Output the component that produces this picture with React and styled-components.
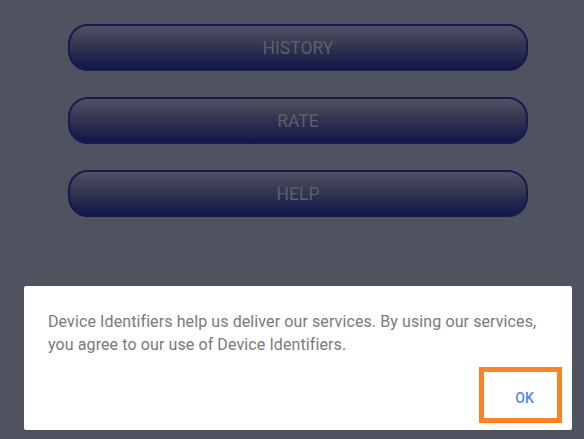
import React from "react";
import styled, { createGlobalStyle } from "styled-components";

const Global = createGlobalStyle`
  html, body {
    margin: 0;
    padding: 0;
    background: #4f525f;
    font-family: Roboto, "Liberation Sans", sans-serif;
  }
`

const Page = styled.div`
  height: 439px;
  display: flex;
  flex-direction: column;
  gap: 26px;
  padding: 24px 0 0 68px;
  box-sizing: border-box;
`

const MenuButton = styled.button`
  width: 460px;
  height: 47px;
  box-sizing: border-box;
  border: 2px solid #161a4c;
  border-radius: 20px;
  background: linear-gradient(to bottom, #4f5262 0%, #343650 45%, #12164a 100%);
  color: #5d5f6b;
  font-family: Roboto, "Liberation Sans", sans-serif;
  font-size: 17.5px;
  padding: 0;
`

const Dialog = styled.div`
  position: fixed;
  left: 24px;
  top: 286px;
  width: 548px;
  height: 144px;
  background: #fff;
  border-radius: 2px;
  box-sizing: border-box;
  padding: 24px 10px 0 24px;
  display: flex;
  flex-direction: column;
`

const Message = styled.p`
  margin: 0;
  padding-right: 10px;
  color: #7a7a7a;
  font-size: 16px;
  line-height: 23px;
  letter-spacing: 0.1px;
`

const Actions = styled.div`
  display: flex;
  justify-content: flex-end;
  margin-top: 11px;
`

const OkButton = styled.button`
  width: 83px;
  height: 56px;
  box-sizing: border-box;
  border: 5px solid #ff8225;
  background: #fff;
  color: #4a8af4;
  font-family: Roboto, "Liberation Sans", sans-serif;
  font-weight: 500;
  font-size: 14px;
  padding: 5px 0 0 8px;
`

export default function App() {
  return (
    <>
      <Global />
      <Page>
        <MenuButton>HISTORY</MenuButton>
        <MenuButton>RATE</MenuButton>
        <MenuButton>HELP</MenuButton>
      </Page>
      <Dialog>
        <Message>
          Device Identifiers help us deliver our services. By using our services,
          you agree to our use of Device Identifiers.
        </Message>
        <Actions>
          <OkButton>OK</OkButton>
        </Actions>
      </Dialog>
    </>
  )
}
